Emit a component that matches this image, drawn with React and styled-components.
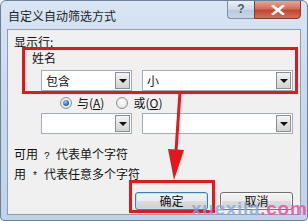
import React from "react";
import styled, { createGlobalStyle } from "styled-components";

const Global = createGlobalStyle`
  html, body { margin: 0; padding: 0; background: #ffffff; }
  body { font-family: "Noto Sans CJK SC", "Liberation Sans", sans-serif; }
`;

const CJK = `"Noto Sans CJK SC", "Liberation Sans", sans-serif`;

const Window = styled.div`
  position: relative;
  width: 308px;
  height: 221px;
  box-sizing: border-box;
  border-radius: 6px 6px 4px 4px;
  border: 1px solid #6d7f96;
  background: linear-gradient(180deg, #d8e5f4 0%, #cadaee 40%, #c0d3ea 100%);
  overflow: hidden;
  display: flex;
  flex-direction: column;
`;

const TitleBar = styled.div`
  height: 28px;
  display: flex;
  align-items: flex-start;
  justify-content: space-between;
  padding-left: 7px;
`;

const Title = styled.div`
  font-family: ${CJK};
  font-size: 12px;
  line-height: 14px;
  margin-top: 8px;
  color: #1e1e1e;
`;

const Controls = styled.div`
  display: flex;
  margin-right: 6px;
  margin-top: -1px;
`;

const HelpButton = styled.div`
  width: 27px;
  height: 19px;
  box-sizing: border-box;
  border: 1px solid #7f8ea3;
  border-right: none;
  border-radius: 0 0 0 4px;
  background: linear-gradient(180deg, #e9eff7 0%, #cdd9e8 50%, #b8c8dc 51%, #c9d7e8 100%);
  color: #4a5b72;
  font-family: "Liberation Sans", sans-serif;
  font-weight: bold;
  font-size: 12px;
  line-height: 17px;
  text-align: center;
`;

const CloseButton = styled.div`
  width: 47px;
  height: 19px;
  box-sizing: border-box;
  border: 1px solid #7a3b35;
  border-radius: 0 0 4px 0;
  background: linear-gradient(180deg, #e8a594 0%, #d46e5c 45%, #c2452f 55%, #d2705d 100%);
  display: flex;
  align-items: center;
  justify-content: center;
`;

const Body = styled.div`
  margin: 0 6px 5px 6px;
  flex: 1;
  box-sizing: border-box;
  border: 1px solid #8f9db0;
  background: #f0f0f0;
  padding: 5px 0 0 6px;
  font-family: ${CJK};
  font-size: 12px;
  color: #111;
  display: flex;
  flex-direction: column;
`;

const Label = styled.div`
  line-height: 14px;
  height: 14px;
`;

const Group = styled.div`
  padding-left: 18px;
  display: flex;
  flex-direction: column;
`;

const FieldName = styled.div`
  line-height: 14px;
  margin-top: 2px;
`;

const ComboRow = styled.div`
  display: flex;
  gap: 10px;
  margin-left: 9px;
  margin-top: ${(p) => p.$top}px;
`;

const Combo = styled.div`
  width: ${(p) => p.$w}px;
  height: 21px;
  box-sizing: border-box;
  border: 1px solid #a5acb5;
  background: #fff;
  display: flex;
  align-items: center;
  justify-content: space-between;
  padding-left: 4px;
  line-height: 14px;
`;

const DropButton = styled.div`
  width: 15px;
  height: 17px;
  margin-right: 1px;
  box-sizing: border-box;
  border: 1px solid #8a8f96;
  background: linear-gradient(180deg, #f4f4f4 0%, #e2e2e2 50%, #d2d2d2 100%);
  display: flex;
  align-items: center;
  justify-content: center;
`;

const Triangle = styled.div`
  width: 0;
  height: 0;
  border-left: 4px solid transparent;
  border-right: 4px solid transparent;
  border-top: 4px solid #111;
  margin-top: 1px;
`;

const RadioRow = styled.div`
  display: flex;
  align-items: center;
  height: 20px;
  margin-top: 2px;
  margin-left: 28px;
  gap: 12px;
`;

const RadioItem = styled.label`
  display: flex;
  align-items: center;
  gap: 5px;
  line-height: 14px;
`;

const Radio = styled.span`
  width: 12px;
  height: 12px;
  box-sizing: border-box;
  border-radius: 50%;
  border: 1px solid #8e8f8f;
  background: radial-gradient(circle at 50% 40%, #ffffff 0%, #e6e6e6 70%, #cfcfcf 100%);
  display: flex;
  align-items: center;
  justify-content: center;
  &::after {
    content: "";
    display: ${(p) => (p.$checked ? "block" : "none")};
    width: 6px;
    height: 6px;
    border-radius: 50%;
    background: radial-gradient(circle at 40% 35%, #8fd2ff 0%, #1c6fb8 60%, #0c4a86 100%);
  }
`;

const Notes = styled.div`
  margin-top: 11px;
  line-height: 17px;
`;

const Half = styled.span`
  font-family: "Liberation Mono", monospace;
  font-size: 10px;
  white-space: pre;
`;

const ButtonRow = styled.div`
  display: flex;
  gap: 12px;
  margin-top: 7px;
  margin-left: 121px;
`;

const Button = styled.div`
  width: 73px;
  height: 18px;
  box-sizing: border-box;
  border-radius: 3px;
  border: 1px solid ${(p) => (p.$default ? "#3c7fb1" : "#707070")};
  box-shadow: inset 0 0 0 1px ${(p) => (p.$default ? "#b8e3fb" : "#fbfbfb")};
  background: linear-gradient(180deg, #f2f2f2 0%, #ebebeb 50%, #dddddd 51%, #cfcfcf 100%);
  text-align: center;
  line-height: 16px;
  font-size: 12px;
`;

const Highlight = styled.div`
  position: absolute;
  left: ${(p) => p.$x}px;
  top: ${(p) => p.$y}px;
  width: ${(p) => p.$w}px;
  height: ${(p) => p.$h}px;
  box-sizing: border-box;
  border: 3px solid #e3171c;
  pointer-events: none;
`;

const ArrowSvg = styled.svg`
  position: absolute;
  left: 0;
  top: 0;
  pointer-events: none;
`;

const Watermark = styled.div`
  position: absolute;
  left: 190px;
  top: 197px;
  font-family: "Liberation Sans", Arial, sans-serif;
  font-weight: bold;
  font-size: 19px;
  line-height: 21px;
  letter-spacing: 0.7px;
  pointer-events: none;
  span:first-child { color: rgba(120, 165, 225, 0.75); }
  span:last-child { color: rgba(232, 80, 160, 0.85); }
`;

const ComboBox = ({ w, value }) => (
  <Combo $w={w}>
    <span>{value}</span>
    <DropButton>
      <Triangle />
    </DropButton>
  </Combo>
);

export default function App() {
  return (
    <>
      <Global />
      <Window>
        <TitleBar>
          <Title>自定义自动筛选方式</Title>
          <Controls>
            <HelpButton>?</HelpButton>
            <CloseButton>
              <svg width="14" height="10" viewBox="0 0 14 10">
                <path d="M2 1 L12 9 M12 1 L2 9" stroke="#ffffff" strokeWidth="2.6" strokeLinecap="square" />
              </svg>
            </CloseButton>
          </Controls>
        </TitleBar>
        <Body>
          <Label>显示行:</Label>
          <Group>
            <FieldName>姓名</FieldName>
            <ComboRow $top={5}>
              <ComboBox w={91} value="包含" />
              <ComboBox w={151} value="小" />
            </ComboRow>
            <RadioRow>
              <RadioItem>
                <Radio $checked />
                <span>与(<u>A</u>)</span>
              </RadioItem>
              <RadioItem>
                <Radio />
                <span>或(<u>O</u>)</span>
              </RadioItem>
            </RadioRow>
            <ComboRow $top={0}>
              <ComboBox w={91} value="" />
              <ComboBox w={151} value="" />
            </ComboRow>
          </Group>
          <Notes>
            <div>可用<Half> ? </Half>代表单个字符</div>
            <div>用<Half> * </Half>代表任意多个字符</div>
          </Notes>
          <ButtonRow>
            <Button $default>确定</Button>
            <Button>取消</Button>
          </ButtonRow>
        </Body>
        <Highlight $x={21} $y={46} $w={276} $h={47} />
        <Highlight $x={128} $y={179} $w={86} $h={33} />
        <ArrowSvg width="308" height="221" viewBox="0 0 308 221">
          <path d="M179 91 L175 150" stroke="#e3171c" strokeWidth="3" fill="none" />
          <path d="M167 148 L183 149 L173 179 Z" fill="#e3171c" />
        </ArrowSvg>
        <Watermark>
          <span>xuexila</span>
          <span>.com</span>
        </Watermark>
      </Window>
    </>
  );
}
